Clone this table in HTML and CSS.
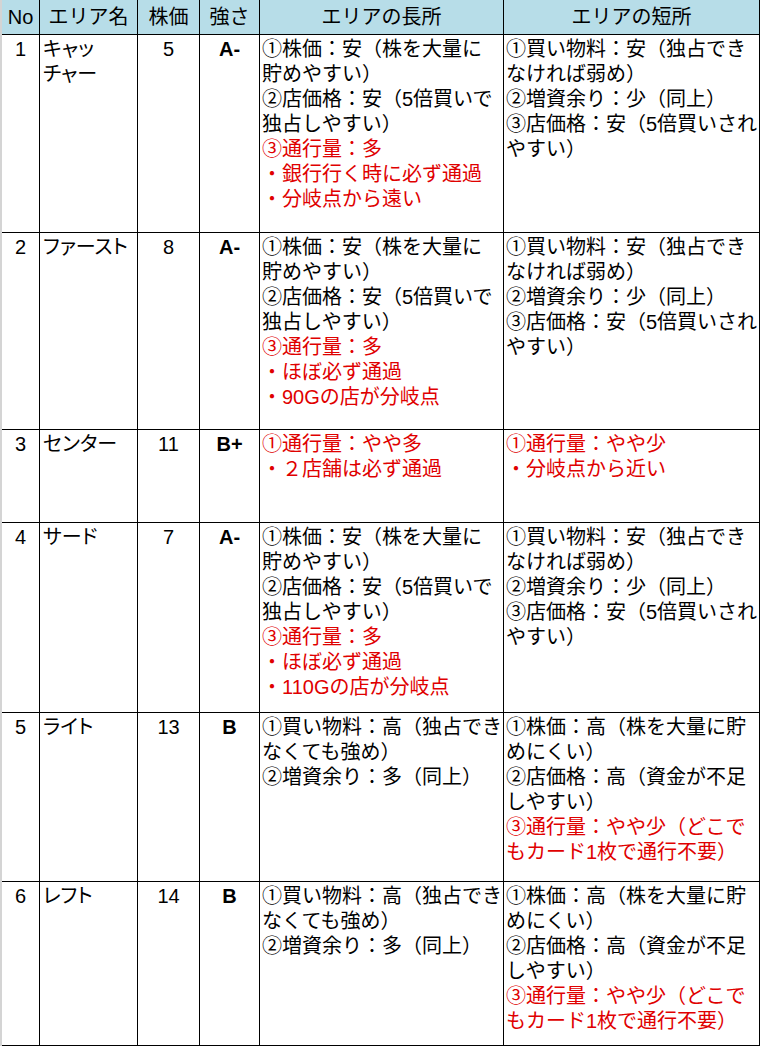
FILE: index.html
```html
<!DOCTYPE html>
<html lang="ja">
<head>
<meta charset="utf-8">
<title>エリア比較</title>
<link rel="stylesheet" href="styles.css">
</head>
<body>
<div class="sheet">
  <div class="grid">
    <div class="hd">No</div>
    <div class="hd">エリア名</div>
    <div class="hd">株価</div>
    <div class="hd">強さ</div>
    <div class="hd">エリアの長所</div>
    <div class="hd">エリアの短所</div>

    <div class="c num">1</div>
    <div class="c name">キャッ<br>チャー</div>
    <div class="c num">5</div>
    <div class="c rank">A-</div>
    <div class="c txt">①株価：安（株を大量に<br>貯めやすい）<br>②店価格：安（5倍買いで<br>独占しやすい）<br><span class="red">③通行量：多<br>・銀行行く時に必ず通過<br>・分岐点から遠い</span></div>
    <div class="c txt">①買い物料：安（独占でき<br>なければ弱め）<br>②増資余り：少（同上）<br>③店価格：安（5倍買いされ<br>やすい）</div>

    <div class="c num">2</div>
    <div class="c name">ファースト</div>
    <div class="c num">8</div>
    <div class="c rank">A-</div>
    <div class="c txt">①株価：安（株を大量に<br>貯めやすい）<br>②店価格：安（5倍買いで<br>独占しやすい）<br><span class="red">③通行量：多<br>・ほぼ必ず通過<br>・90Gの店が分岐点</span></div>
    <div class="c txt">①買い物料：安（独占でき<br>なければ弱め）<br>②増資余り：少（同上）<br>③店価格：安（5倍買いされ<br>やすい）</div>

    <div class="c num">3</div>
    <div class="c name">センター</div>
    <div class="c num">11</div>
    <div class="c rank">B+</div>
    <div class="c txt"><span class="red">①通行量：やや多<br>・２店舗は必ず通過</span></div>
    <div class="c txt"><span class="red">①通行量：やや少<br>・分岐点から近い</span></div>

    <div class="c num">4</div>
    <div class="c name">サード</div>
    <div class="c num">7</div>
    <div class="c rank">A-</div>
    <div class="c txt">①株価：安（株を大量に<br>貯めやすい）<br>②店価格：安（5倍買いで<br>独占しやすい）<br><span class="red">③通行量：多<br>・ほぼ必ず通過<br>・110Gの店が分岐点</span></div>
    <div class="c txt">①買い物料：安（独占でき<br>なければ弱め）<br>②増資余り：少（同上）<br>③店価格：安（5倍買いされ<br>やすい）</div>

    <div class="c num">5</div>
    <div class="c name">ライト</div>
    <div class="c num">13</div>
    <div class="c rank">B</div>
    <div class="c txt">①買い物料：高（独占でき<br>なくても強め）<br>②増資余り：多（同上）</div>
    <div class="c txt">①株価：高（株を大量に貯<br>めにくい）<br>②店価格：高（資金が不足<br>しやすい）<br><span class="red">③通行量：やや少（どこで<br>もカード1枚で通行不要）</span></div>

    <div class="c num">6</div>
    <div class="c name">レフト</div>
    <div class="c num">14</div>
    <div class="c rank">B</div>
    <div class="c txt">①買い物料：高（独占でき<br>なくても強め）<br>②増資余り：多（同上）</div>
    <div class="c txt">①株価：高（株を大量に貯<br>めにくい）<br>②店価格：高（資金が不足<br>しやすい）<br><span class="red">③通行量：やや少（どこで<br>もカード1枚で通行不要）</span></div>
  </div>
</div>
</body>
</html>
```

FILE: styles.css
```css
html, body {
  margin: 0;
  padding: 0;
  background: #ffffff;
}

.sheet {
  display: flex;
  border-left: 2px solid #d4d4d4;
  width: 759px;
}

.grid {
  display: grid;
  grid-template-columns: 37px 97px 61px 59px 243px 255px;
  grid-template-rows: 34px 197px 196px 92px 189px 168px 163px;
  gap: 1px;
  background: #000000;
  border-right: 1px solid #000000;
  border-bottom: 1px solid #000000;
  font-family: "Liberation Sans", "Noto Sans CJK JP", sans-serif;
  font-size: 20px;
  color: #000000;
}

.hd {
  background: #b7dde8;
  display: flex;
  align-items: center;
  justify-content: center;
  line-height: 25px;
  white-space: nowrap;
  padding-top: 1px;
}

.c {
  background: #ffffff;
  line-height: 25px;
  padding: 2px 3px 0 3px;
  white-space: nowrap;
  overflow: hidden;
}

.num {
  text-align: center;
  padding-left: 0;
  padding-right: 0;
}

.name {
  font-feature-settings: "palt";
}

.rank {
  text-align: center;
  font-weight: bold;
  font-size: 20px;
  padding-left: 0;
  padding-right: 0;
}

.txt {
  padding-left: 2px;
  padding-right: 0;
}

.red {
  color: #e00000;
}
```
